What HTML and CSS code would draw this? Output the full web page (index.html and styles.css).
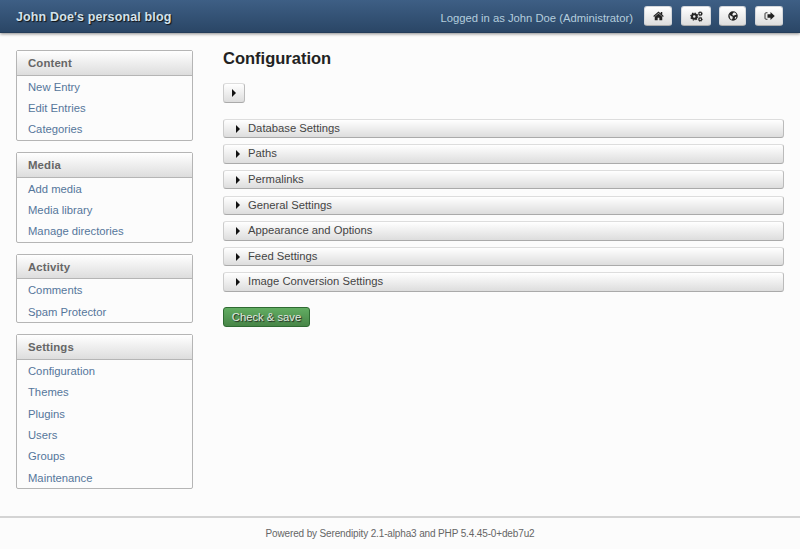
FILE: index.html
```html
<!DOCTYPE html>
<html lang="en">
<head>
<meta charset="utf-8">
<title>Configuration</title>
<link rel="stylesheet" href="styles.css">
</head>
<body>
<header class="top">
  <h1 class="site-name">John Doe's personal blog</h1>
  <div class="user">
    <span class="login">Logged in as John Doe (Administrator)</span>
    <nav class="tools">
      <a class="tool home" title="Home"><svg width="11" height="10" viewBox="0 0 22 20"><path d="M11 1 .5 10l1.500 1.800L11 4.200l9 7.600 1.500-1.800-3-2.600V2h-3v2.800z"/><path d="M11 5 3.500 11.500V18.500h5.800v-5h3.400v5h5.800v-7z"/></svg></a>
      <a class="tool gears" title="Settings"><svg width="13" height="11" viewBox="0 0 26 22"><g fill="none" stroke="currentColor"><circle cx="8.500" cy="11" r="4.500" stroke-width="4"/><circle cx="8.500" cy="11" r="7" stroke-width="2.400" stroke-dasharray="2.750"/><circle cx="20.500" cy="5.300" r="2.800" stroke-width="2.400"/><circle cx="20.500" cy="5.300" r="4.300" stroke-width="1.400" stroke-dasharray="1.690"/><circle cx="20.500" cy="16.700" r="2.800" stroke-width="2.400"/><circle cx="20.500" cy="16.700" r="4.300" stroke-width="1.400" stroke-dasharray="1.690"/></g></svg></a>
      <a class="tool globe" title="View blog"><svg width="10" height="10" viewBox="0 0 20 20"><path fill-rule="evenodd" d="M10 .5a9.500 9.500 0 1 0 0 19a9.500 9.500 0 0 0 0-19zM12 2.500l3.500 2 1.500 3-3 .5-2.500 1.500L8.500 8l1-3zM3 7l3 3 3.500 1.500L9 15l-1.500 2.500-3.500-3zM14 12l3-.5-1.500 3.500-2 1z"/></svg></a>
      <a class="tool logout" title="Logout"><svg width="11" height="10" viewBox="0 0 22 20"><path fill="none" stroke="currentColor" stroke-width="1.800" d="M7 3.500H4Q2 3.500 2 5.500v9q0 2 2 2h3"/><path d="M7 6.500h6V2l8.500 8-8.500 8v-4.500H7z"/></svg></a>
    </nav>
  </div>
</header>
<div class="page">
  <nav class="sidebar">
    <section class="box"><h2>Content</h2><ul><li>New Entry</li><li>Edit Entries</li><li>Categories</li></ul></section>
    <section class="box"><h2>Media</h2><ul><li>Add media</li><li>Media library</li><li>Manage directories</li></ul></section>
    <section class="box"><h2>Activity</h2><ul><li>Comments</li><li>Spam Protector</li></ul></section>
    <section class="box"><h2>Settings</h2><ul><li>Configuration</li><li>Themes</li><li>Plugins</li><li>Users</li><li>Groups</li><li>Maintenance</li></ul></section>
  </nav>
  <main class="content">
    <h2 class="title">Configuration</h2>
    <button class="btn toggle-all" aria-label="Toggle all"><i class="caret"></i></button>
    <div class="options">
      <button class="btn option"><i class="caret"></i>Database Settings</button>
      <button class="btn option"><i class="caret"></i>Paths</button>
      <button class="btn option"><i class="caret"></i>Permalinks</button>
      <button class="btn option"><i class="caret"></i>General Settings</button>
      <button class="btn option"><i class="caret"></i>Appearance and Options</button>
      <button class="btn option"><i class="caret"></i>Feed Settings</button>
      <button class="btn option"><i class="caret"></i>Image Conversion Settings</button>
    </div>
    <button class="save">Check &amp; save</button>
  </main>
</div>
<footer class="foot">Powered by Serendipity 2.1-alpha3 and PHP 5.4.45-0+deb7u2</footer>
</body>
</html>
```
FILE: styles.css
```css
* { box-sizing: border-box; }
body {
  margin: 0;
  height: 549px;
  overflow: hidden;
  display: flex;
  flex-direction: column;
  background: #fcfcfc;
  color: #444;
  font: 11.25px/21.4px "Liberation Sans", Arial, sans-serif;
}
h1, h2, ul { margin: 0; padding: 0; }
ul { list-style: none; }
.top {
  height: 33px;
  flex: none;
  display: flex;
  justify-content: space-between;
  padding: 0 17px 0 16px;
  background: linear-gradient(#3e5f85, #2a4666);
  border-bottom: 1px solid #243d5a;
  box-shadow: 0 1px 3px #888;
}
.site-name {
  font-size: 12.5px;
  line-height: 34px;
  letter-spacing: .13px;
  color: #d3e2ec;
  text-shadow: 1px 1px 1px #111;
}
.user { display: flex; }
.login { line-height: 36px; color: #b4cddd; margin-right: 11px; }
.tools { display: flex; padding-top: 6px; }
.tool {
  height: 20px;
  width: 28px;
  display: flex;
  align-items: center;
  justify-content: center;
  color: #222;
  border: 1px solid #d5d8dc;
  border-bottom-color: #aaa;
  border-radius: 3px;
  background: linear-gradient(#fff, #ddd);
}
.tool svg { fill: currentColor; }
.gears { width: 30px; margin-left: 9px; }
.globe { width: 27px; margin-left: 8px; }
.logout { width: 28px; margin-left: 9px; }
.page { display: flex; padding: 17px 16px 0; height: 483px; }
.sidebar { width: 177px; margin-right: 30px; display: flex; flex-direction: column; gap: 11px; }
.box { border: 1px solid #b5b5b5; border-radius: 2px; }
.box h2 {
  height: 24.700px;
  padding-left: 11px;
  border-bottom: 1px solid #b5b5b5;
  background: linear-gradient(#fff, #ddd);
  color: #666;
  font-size: 11.400px;
  line-height: 24px;
  letter-spacing: .12px;
}
.box li { padding-left: 11px; height: 21.400px; line-height: 23.400px; color: #55769b; }
.content { flex: 1; display: flex; flex-direction: column; align-items: flex-start; }
.title { font-size: 16.500px; line-height: 17px; color: #222; }
.btn {
  display: flex;
  align-items: center;
  font: inherit;
  color: #444;
  height: 19.500px;
  padding: 0;
  border: 1px solid #ccc;
  border-color: #ddd #bbb #aaa #ccc;
  border-radius: 3px;
  background: linear-gradient(#fff, #ddd);
}
.caret {
  border: solid transparent;
  border-width: 4px 0 4px 4px;
  border-left-color: #111;
}
.toggle-all { width: 22px; justify-content: center; margin: 16px 0 16.300px; }
.options { width: 561px; display: flex; flex-direction: column; gap: 6.100px; }
.option { width: 100%; padding-left: 12px; }
.option .caret { margin-right: 8px; }
.save {
  width: 87px;
  height: 20px;
  margin-top: 15.500px;
  padding: 0;
  font: inherit;
  line-height: 18px;
  color: #e0ece0;
  text-shadow: 1px 1px 1px #222;
  border: 1px solid #2f6b32;
  border-radius: 3px;
  background: linear-gradient(#62ad62, #478547);
}
.foot {
  flex: 1;
  border-top: 2px solid #d4d4d4;
  padding-top: 5px;
  text-align: center;
  font-size: 10px;
  letter-spacing: -.14px;
  color: #666;
}
```
